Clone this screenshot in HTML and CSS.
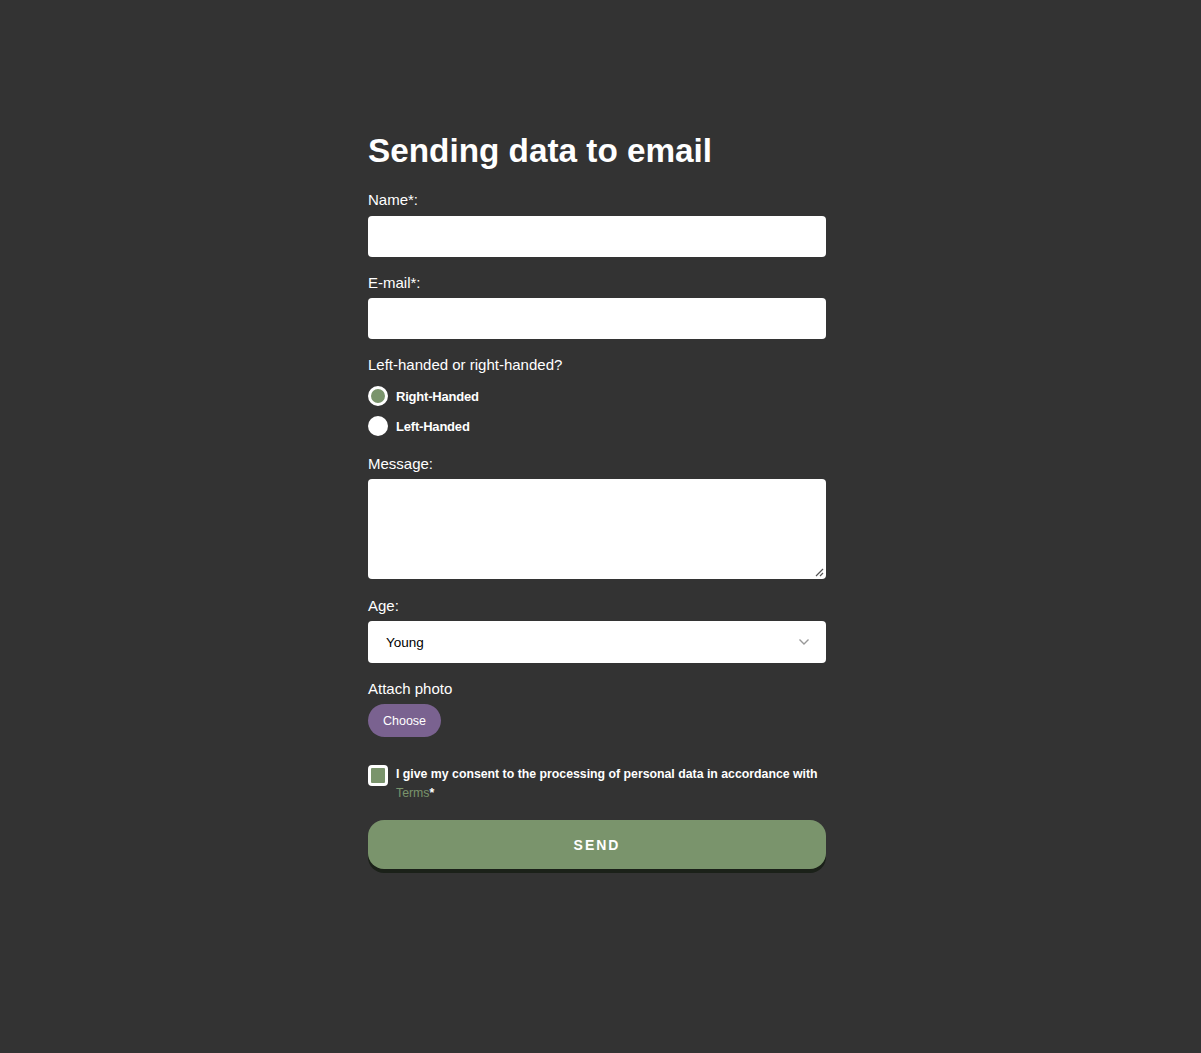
FILE: index.html
```html
<!DOCTYPE html>
<html lang="en">
<head>
<meta charset="utf-8">
<title>Sending data to email</title>
<link rel="stylesheet" href="styles.css">
</head>
<body>
<main class="page">
  <form class="form">
    <h1 class="title">Sending data to email</h1>
    <div class="field field-name">
      <label class="label">Name*:</label>
      <div class="input"></div>
    </div>
    <div class="field">
      <label class="label">E-mail*:</label>
      <div class="input"></div>
    </div>
    <div class="field field-radios">
      <div class="label">Left-handed or right-handed?</div>
      <div class="radios">
        <div class="radio-row"><span class="radio checked"></span><span class="opt">Right-Handed</span></div>
        <div class="radio-row"><span class="radio"></span><span class="opt">Left-Handed</span></div>
      </div>
    </div>
    <div class="field field-message">
      <label class="label">Message:</label>
      <div class="textarea">
        <svg class="grip" width="9" height="9" viewBox="0 0 9 9"><path d="M8 1 L1 8 M8 5 L5 8" stroke="#555" stroke-width="1.2" fill="none"/></svg>
      </div>
    </div>
    <div class="field">
      <label class="label">Age:</label>
      <div class="select">
        <span class="sel-text">Young</span>
        <svg class="chev" width="12" height="8" viewBox="0 0 12 8"><path d="M1.5 1.5 L6 6 L10.5 1.5" stroke="#999" stroke-width="1.4" fill="none"/></svg>
      </div>
    </div>
    <div class="field">
      <label class="label">Attach photo</label>
      <div><span class="choose">Choose</span></div>
    </div>
    <div class="consent">
      <span class="checkbox"></span>
      <span class="consent-text">I give my consent to the processing of personal data in accordance with <span class="terms">Terms</span>*</span>
    </div>
    <div class="send">SEND</div>
  </form>
</main>
</body>
</html>
```
FILE: styles.css
```css
html, body {
  margin: 0;
  padding: 0;
  background: #333333;
}
body {
  font-family: "Liberation Sans", Arial, sans-serif;
  color: #ffffff;
  min-height: 1053px;
}
.page {
  display: flex;
  justify-content: center;
  padding-top: 128px;
  padding-right: 7px;
}
.form {
  width: 458px;
  display: flex;
  flex-direction: column;
}
.title {
  font-size: 33.3px;
  font-weight: bold;
  margin: 0 0 17px 0;
  line-height: 46px;
}
.field {
  display: flex;
  flex-direction: column;
  margin-bottom: 17px;
}
.field-name .label {
  margin-bottom: 8px;
}
.field-radios {
  margin-bottom: 19px;
}
.field-message {
  margin-bottom: 18px;
}
.label {
  font-size: 15px;
  line-height: 17px;
  margin-bottom: 7px;
}
.input {
  height: 41px;
  background: #fff;
  border-radius: 4px;
}
.radios {
  display: flex;
  flex-direction: column;
  gap: 10px;
  padding-top: 6px;
}
.radio-row {
  display: flex;
  align-items: center;
  gap: 8px;
  height: 20px;
}
.radio {
  width: 20px;
  height: 20px;
  border-radius: 50%;
  background: #fff;
  box-sizing: border-box;
}
.radio.checked {
  border: 3px solid #fff;
  background: #7a946c;
}
.opt {
  font-size: 13px;
  font-weight: 600;
  letter-spacing: -0.2px;
}
.textarea {
  position: relative;
  height: 100px;
  background: #fff;
  border-radius: 4px;
}
.grip {
  position: absolute;
  right: 2px;
  bottom: 2px;
}
.select {
  height: 42px;
  background: #fff;
  border-radius: 4px;
  display: flex;
  align-items: center;
  justify-content: space-between;
  padding: 0 16px 0 18px;
  box-sizing: border-box;
  color: #000;
}
.sel-text {
  font-size: 13.5px;
}
.choose {
  display: inline-flex;
  align-items: center;
  justify-content: center;
  width: 73px;
  height: 33px;
  border-radius: 17px;
  background: #7a6290;
  font-size: 12.5px;
  color: #fff;
}
.consent {
  display: flex;
  gap: 8px;
  margin-top: 11px;
  margin-bottom: 17px;
}
.checkbox {
  flex: none;
  width: 20px;
  height: 21px;
  box-sizing: border-box;
  border: 3px solid #fff;
  border-radius: 4px;
  background: #7a946c;
}
.consent-text {
  font-size: 12.3px;
  font-weight: 600;
  line-height: 19px;
}
.terms {
  color: #7a946c;
  font-weight: normal;
}
.send {
  height: 49px;
  border-radius: 16px;
  background: #7a946c;
  box-shadow: 0 4px 0 #1b2119;
  display: flex;
  align-items: center;
  justify-content: center;
  font-size: 14px;
  font-weight: bold;
  letter-spacing: 2px;
}
```
